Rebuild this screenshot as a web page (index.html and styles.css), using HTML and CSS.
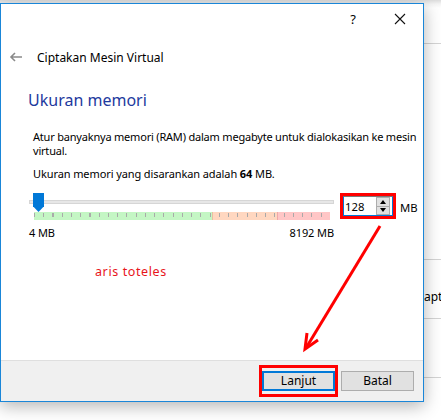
FILE: index.html
```html
<!DOCTYPE html>
<html lang="id">
<head>
    <meta charset="UTF-8">
    <meta name="viewport" content="width=device-width, initial-scale=1.0">
    <title>Ciptakan Mesin Virtual</title>
    <link rel="stylesheet" href="styles.css">
</head>
<body>
    <div class="screen">
        <div class="dialog">
            <div class="titlebar">
                <span class="help">?</span>
                <svg class="close" width="12" height="12" viewBox="0 0 12 12">
                    <path d="M1 1 L11 11 M11 1 L1 11" stroke="#111" stroke-width="1.1" fill="none"/>
                </svg>
            </div>
            <div class="header">
                <svg class="back" width="14" height="10" viewBox="0 0 14 10">
                    <path d="M13 5 H2 M6 1 L2 5 L6 9" stroke="#8a8a8a" stroke-width="1.6" fill="none"/>
                </svg>
                <span class="wizard-title">Ciptakan Mesin Virtual</span>
            </div>

            <div class="page">
                <h1>Ukuran memori</h1>
                <p class="desc">Atur banyaknya memori (RAM) dalam megabyte untuk dialokasikan ke mesin virtual.</p>
                <p class="recommend">Ukuran memori yang disarankan adalah <b>64</b> MB.</p>

                <div class="memory-row">
                    <div class="slider">
                        <div class="track"></div>
                        <div class="thumb"></div>
                        <div class="scale">
                            <div class="zone green"></div>
                            <div class="zone orange"></div>
                            <div class="zone red"></div>
                        </div>
                        <div class="limits">
                            <span>4 MB</span>
                            <span>8192 MB</span>
                        </div>
                    </div>
                    <div class="spin-mark">
                        <div class="spinbox">
                            <span class="spin-value">128</span>
                            <div class="spin-buttons">
                                <span class="up"></span>
                                <span class="down"></span>
                            </div>
                        </div>
                    </div>
                    <span class="unit">MB</span>
                </div>

                <p class="note">aris toteles</p>
            </div>

            <div class="footer">
                <div class="next-mark">
                    <button class="btn btn-default">Lanjut</button>
                </div>
                <button class="btn">Batal</button>
            </div>
        </div>
        <div class="behind">
            <div class="behind-row first"></div>
            <div class="behind-row tall"></div>
            <div class="behind-row"><span>apte</span></div>
            <div class="behind-row"></div>
        </div>

        <!-- annotation arrow -->
        <svg class="arrow" width="441" height="420" viewBox="0 0 441 420">
            <line x1="380" y1="226" x2="306" y2="348" stroke="#f00" stroke-width="3"/>
            <polyline points="318,340 305,349 307,333" stroke="#f00" stroke-width="3" fill="none" stroke-linejoin="miter"/>
        </svg>
    </div>
</body>
</html>
```

FILE: styles.css
```css
:root {
    --accent: #0078d7;
    --border-blue: #1a86d8;
    --mark: #ff0000;
    --button-bg: #e1e1e1;
    --button-border: #adadad;
}
body {
    margin: 0;
    font-family: "Noto Sans", "Open Sans", sans-serif;
    font-size: 12px;
    color: #000;
    background: #fff;
}
.screen {
    position: relative;
    width: 441px;
    height: 420px;
    overflow: hidden;
    display: flex;
    background: linear-gradient(#dcdcdc, #f4f4f4 4px, #fff 8px);
}
.dialog {
    position: relative;
    z-index: 1;
    width: 422px;
    height: 397px;
    margin-top: 3px;
    border: 1px solid var(--border-blue);
    background: #fff;
    box-shadow: 0 4px 16px rgba(0, 0, 0, 0.3);
    display: flex;
    flex-direction: column;
    flex-shrink: 0;
}
.titlebar {
    height: 30px;
    display: flex;
    align-items: center;
    justify-content: flex-end;
}
.help {
    font-size: 13px;
    margin-right: 38px;
}
.close {
    margin-right: 17px;
}
.header {
    height: 46px;
    display: flex;
    align-items: center;
    padding-bottom: 1px;
}
.back {
    margin-left: 8px;
    margin-right: 14px;
}
.wizard-title {
    font-size: 12px;
}
.page {
    flex: 1;
    padding-left: 27px;
}
h1 {
    margin: 9px 0 0;
    font-size: 16px;
    font-weight: normal;
    color: #1e3a9e;
    line-height: 20px;
}
.desc {
    margin: 20px 0 0 5px;
    width: 385px;
    line-height: 14px;
    font-size: 11px;
    letter-spacing: -0.2px;
}
.recommend {
    margin: 9px 0 0 5px;
    line-height: 14px;
    font-size: 11px;
    letter-spacing: -0.1px;
}
.memory-row {
    display: flex;
    align-items: flex-start;
    margin-top: 12px;
}
.slider {
    position: relative;
    width: 305px;
    margin-left: 1px;
    padding-top: 7px;
}
.track {
    height: 2px;
    background: #e7e7e7;
    border: 1px solid #d6d6d6;
}
.thumb {
    position: absolute;
    left: 4px;
    top: 0;
    width: 11px;
    height: 19px;
    background: var(--accent);
    clip-path: polygon(0 0, 100% 0, 100% 70%, 50% 100%, 0 70%);
}
.scale {
    display: flex;
    height: 8px;
    margin: 8px 4px 0 5px;
    position: relative;
}
.scale::after {
    content: "";
    position: absolute;
    left: 0;
    right: 0;
    top: 1px;
    height: 4px;
    background: repeating-linear-gradient(to right, #a9a9a9 0 1px, transparent 1px 9.25px);
}
.zone.green {
    width: 178px;
    background: #c4f6c4;
}
.zone.orange {
    width: 64px;
    background: #ffd7c0;
    border-left: 1px solid #e8c0a0;
}
.zone.red {
    flex: 1;
    background: #ffc6c6;
    border-left: 1px solid #f0a8a8;
}
.limits {
    display: flex;
    justify-content: space-between;
    margin-top: 6px;
    font-size: 11px;
    line-height: 14px;
    letter-spacing: -0.1px;
}
.spin-mark {
    margin-left: 6px;
    border: 3px solid var(--mark);
}
.spinbox {
    width: 48px;
    height: 18px;
    border: 1px solid var(--accent);
    border-top-color: #7a7a7a;
    display: flex;
    align-items: center;
    justify-content: space-between;
    background: #fff;
}
.spin-value {
    padding-left: 1px;
    font-size: 11.3px;
}
.spin-buttons {
    width: 12px;
    height: 16px;
    margin-right: 2px;
    border: 1px solid var(--button-border);
    background: var(--button-bg);
    display: flex;
    flex-direction: column;
}
.spin-buttons span {
    flex: 1;
    display: flex;
    align-items: center;
    justify-content: center;
}
.spin-buttons .up {
    border-bottom: 1px solid var(--button-border);
}
.spin-buttons .up::before {
    content: "";
    border: 3px solid transparent;
    border-bottom: 4px solid #000;
    border-top: 0;
}
.spin-buttons .down::before {
    content: "";
    border: 3px solid transparent;
    border-top: 4px solid #000;
    border-bottom: 0;
}
.unit {
    margin-left: 4px;
    margin-top: 7px;
    font-size: 11.3px;
}
.note {
    margin: 23px 0 0 67px;
    color: #e8141b;
    font-size: 12.5px;
    letter-spacing: 0.6px;
}
.footer {
    height: 41px;
    background: #f0f0f0;
    border-top: 1px solid #dfdfdf;
    display: flex;
    align-items: center;
    justify-content: flex-end;
    padding-right: 9px;
    box-sizing: border-box;
}
.next-mark {
    border: 3px solid var(--mark);
    padding: 3px 0;
    margin-right: 3px;
    display: flex;
}
.btn {
    width: 73px;
    height: 20px;
    border: 1px solid var(--button-border);
    background: var(--button-bg);
    font-family: inherit;
    font-size: 12px;
    color: #000;
    padding: 0;
    line-height: 16px;
}
.btn-default {
    border: 2px solid var(--accent);
}
.behind {
    flex: 1;
}
.behind-row {
    height: 58px;
    border-bottom: 1px solid #d4d4d4;
    position: relative;
}
.behind-row.first {
    height: 43px;
}
.behind-row.tall {
    height: 215px;
}
.behind-row span {
    position: absolute;
    left: 0;
    top: 28px;
    font-size: 12px;
    color: #000;
}
.arrow {
    position: absolute;
    left: 0;
    top: 0;
    z-index: 2;
    pointer-events: none;
}
```
